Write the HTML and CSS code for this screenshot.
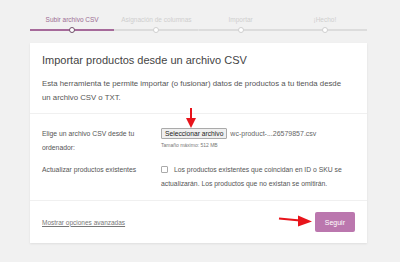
FILE: index.html
```html
<!DOCTYPE html>
<html lang="es">
<head>
<meta charset="utf-8">
<title>Importar productos</title>
<link rel="stylesheet" href="styles.css">
</head>
<body>
<div class="page">
  <ol class="steps">
    <li class="step active"><span class="step-label">Subir archivo CSV</span><span class="step-track"><span class="dot"></span></span></li>
    <li class="step"><span class="step-label">Asignación de columnas</span><span class="step-track"><span class="dot"></span></span></li>
    <li class="step"><span class="step-label">Importar</span><span class="step-track"><span class="dot"></span></span></li>
    <li class="step"><span class="step-label">¡Hecho!</span><span class="step-track"><span class="dot"></span></span></li>
  </ol>
  <div class="card">
    <header class="card-head">
      <h2 class="title">Importar productos desde un archivo CSV</h2>
      <p class="intro">Esta herramienta te permite importar (o fusionar) datos de productos a tu tienda desde un archivo CSV o TXT.</p>
    </header>
    <section class="form">
      <div class="row">
        <span class="row-label">Elige un archivo CSV desde tu ordenador:</span>
        <div class="row-field">
          <div class="file"><span class="file-btn">Seleccionar archivo</span><span class="file-name">wc-product-...26579857.csv</span></div>
          <div class="hint">Tamaño máximo: 512 MB</div>
        </div>
      </div>
      <div class="row">
        <span class="row-label">Actualizar productos existentes</span>
        <div class="row-field check-text"><span class="checkbox"></span>Los productos existentes que coincidan en ID o SKU se actualizarán. Los productos que no existan se omitirán.</div>
      </div>
    </section>
    <footer class="card-foot">
      <a class="adv-link">Mostrar opciones avanzadas</a>
      <span class="btn-primary">Seguir</span>
    </footer>
  </div>
  <svg class="annot" width="400" height="262" viewBox="0 0 400 262">
    <line x1="191" y1="108" x2="191" y2="119" stroke="#e8141b" stroke-width="2"/>
    <polygon points="186,118 196,118 191,128" fill="#e8141b"/>
    <line x1="279" y1="218.5" x2="300" y2="220.5" stroke="#e8141b" stroke-width="2"/>
    <polygon points="298,215.5 312,221.5 298,226.5" fill="#e8141b"/>
  </svg>
</div>
</body>
</html>
```

FILE: styles.css
```css
html, body {
  margin: 0;
  padding: 0;
  background: #f1f1f1;
}
body {
  font-family: "Liberation Sans", Arial, sans-serif;
  color: #555;
}
.page {
  position: relative;
  width: 400px;
  height: 262px;
}
.steps {
  display: flex;
  list-style: none;
  margin: 0 33px 0 30px;
  padding: 14px 0 0;
}
.step {
  flex: 1;
  display: flex;
  flex-direction: column;
  align-items: center;
}
.step-label {
  font-size: 6.5px;
  line-height: 12px;
  color: #cfcfcf;
  white-space: nowrap;
}
.step.active .step-label {
  color: #9c6d93;
}
.step-track {
  align-self: stretch;
  height: 8px;
  display: flex;
  justify-content: center;
  align-items: center;
  background: linear-gradient(#dcdcdc, #dcdcdc) center / 100% 2px no-repeat;
}
.step.active .step-track {
  background: linear-gradient(#a66a9a, #a66a9a) center / 100% 2px no-repeat;
}
.dot {
  width: 4px;
  height: 4px;
  border: 1.5px solid #cfcfcf;
  border-radius: 50%;
  background: #fff;
}
.step.active .dot {
  border-color: #6f4f69;
}
.card {
  margin: 9px 33px 0 30px;
  background: #fff;
  box-shadow: 0 1px 2px rgba(0, 0, 0, 0.08);
}
.card-head {
  padding: 10px 12px 8px;
  border-bottom: 1px solid #f0f0f0;
}
.title {
  margin: 0;
  font-size: 11px;
  line-height: 14px;
  font-weight: normal;
  color: #444;
}
.intro {
  margin: 10px 0 0;
  max-width: 306px;
  font-size: 7.8px;
  line-height: 14px;
  color: #555;
}
.form {
  padding: 13px 12px 9px;
  display: flex;
  flex-direction: column;
  gap: 8px;
}
.row {
  display: grid;
  grid-template-columns: 119px 1fr;
  font-size: 6.8px;
  line-height: 14px;
}
.row-label {
  padding-right: 16px;
  color: #555;
}
.file {
  display: flex;
  align-items: center;
  gap: 3px;
  margin-top: 1px;
  height: 11px;
}
.file-btn {
  height: 11px;
  box-sizing: border-box;
  padding: 0 3px;
  border: 1px solid #aaa;
  border-radius: 1px;
  background: #efefef;
  color: #222;
  font-size: 6.7px;
  line-height: 9px;
  white-space: nowrap;
}
.file-name {
  font-size: 7px;
  color: #666;
  white-space: nowrap;
}
.hint {
  margin-top: 3px;
  font-size: 5px;
  line-height: 6px;
  color: #777;
}
.check-text {
  color: #555;
}
.checkbox {
  display: inline-block;
  width: 7px;
  height: 7px;
  box-sizing: border-box;
  border: 1px solid #aaa;
  border-radius: 1px;
  background: #fff;
  margin-right: 6px;
  vertical-align: -1px;
}
.card-foot {
  border-top: 1px solid #f0f0f0;
  padding: 11px 12px;
  display: flex;
  justify-content: space-between;
  align-items: center;
}
.adv-link {
  font-size: 6.5px;
  color: #777;
  text-decoration: underline;
}
.btn-primary {
  display: flex;
  align-items: center;
  height: 20px;
  padding: 0 10px;
  background: #bb77ae;
  border-radius: 2px;
  color: #fff;
  font-size: 7px;
}
.annot {
  position: absolute;
  top: 0;
  left: 0;
  pointer-events: none;
}
```
